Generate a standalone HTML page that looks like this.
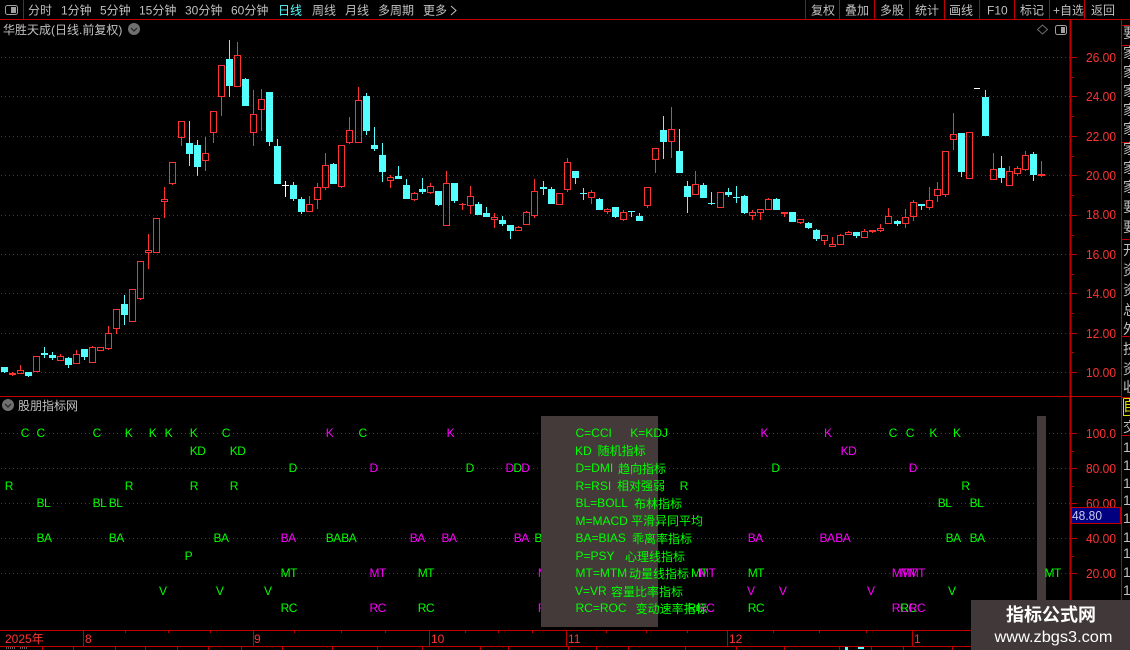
<!DOCTYPE html>
<html><head><meta charset="utf-8"><style>
html,body{margin:0;padding:0;background:#000;width:1130px;height:650px;overflow:hidden}
svg{display:block;position:absolute;left:0;top:0}
text{font-family:"Liberation Sans","WenQuanYi Zen Hei","Noto Sans CJK SC",sans-serif;font-size:12px}
.t{fill:#c0c0c0}
.a{fill:#ff3232;font-size:13px}
.g{fill:#00ff00;letter-spacing:-.5px}
.m{fill:#ff00ff;letter-spacing:-.5px}
.o{fill:#00ff00;font-size:12px}
</style></head><body>
<svg width="1130" height="650" viewBox="0 0 1130 650">
<!-- grid -->
<g stroke="#d00000" stroke-width="1" stroke-dasharray="1 3" fill="none" shape-rendering="crispEdges">
<path d="M1 57.5H1070M1 96.5H1070M1 136.5H1070M1 175.5H1070M1 215.5H1070M1 254.5H1070M1 293.5H1070M1 333.5H1070M1 372.5H1070"/>
<path d="M1 433.5H1070M1 468.5H1070M1 503.5H1070M1 538.5H1070M1 573.5H1070"/>
</g>
<!-- frame lines -->
<g stroke="#c00000" fill="none" shape-rendering="crispEdges">
<path d="M0 19.5H1130M0 396.5H1122M0 630.5H971M0 646.5H971"/>
<path d="M23.5 0V19M805.5 0V19M839.5 0V19M874.5 0V19M909.5 0V19M944.5 0V19M979.5 0V19M1014.5 0V19M1049.5 0V19M1084.5 0V19"/>
<path d="M1070.5 20V630" stroke-width="2"/>
<path d="M1121.5 20V600" stroke-width="1.4"/>
<path d="M1122 25.5H1130M1122 45.5H1130M1122 142.5H1130M1122 239.5H1130M1122 336.5H1130M1122 397.5H1130M1122 435.5H1130"/>
<path d="M1072 57.5H1077M1072 96.5H1077M1072 136.5H1077M1072 175.5H1077M1072 215.5H1077M1072 254.5H1077M1072 293.5H1077M1072 333.5H1077M1072 372.5H1077"/>
<path d="M1072 77.5H1074M1072 116.5H1074M1072 156.5H1074M1072 195.5H1074M1072 235.5H1074M1072 274.5H1074M1072 313.5H1074M1072 352.5H1074"/>
<path d="M1072 433.5H1077M1072 468.5H1077M1072 503.5H1077M1072 538.5H1077M1072 573.5H1077M1072 451.5H1074M1072 486.5H1074M1072 556.5H1074"/>
<path d="M83.5 631V646M253.5 631V646M429.5 631V646M566.5 631V646M727.5 631V646M912.5 631V646"/>
<path d="M125.5 631V633M168.5 631V633M210.5 631V633M294.5 631V633M341.5 631V633M385.5 631V633M465.5 631V633M498.5 631V633M532.5 631V633M606.5 631V633M646.5 631V633M687.5 631V633M773.5 631V633M819.5 631V633M866.5 631V633"/>
<path d="M42.5 647V650M73.5 647V650M115.5 647V650M145.5 647V650M177.5 647V650M208.5 647V650M241.5 647V650M282.5 647V650M332.5 647V650M377.5 647V650M422.5 647V650M480.5 647V650M508.5 647V650M568.5 647V650M596.5 647V650M628.5 647V650M685.5 647V650M736.5 647V650M784.5 647V650M839.5 647V650M871.5 647V650M903.5 647V650M952.5 647V650"/>
</g>
<!-- candles -->
<g fill="none" stroke="#ff3232" stroke-width="1" shape-rendering="crispEdges">
<path d="M12.5 372V373M12.5 375V376M20.5 365V370M60.5 354V356M76.5 350V354M92.5 346V347M108.5 326V333M108.5 349V350M116.5 329V334M140.5 299V300M148.5 234V250M148.5 253V269M164.5 187V199M164.5 202V218M172.5 184V185M181.5 138V146M205.5 137V153M205.5 161V171M213.5 133V143M221.5 97V116M237.5 42V55M253.5 90V114M253.5 133V146M261.5 89V99M261.5 110V131M309.5 196V204M317.5 183V187M317.5 200V209M325.5 153V165M325.5 188V190M341.5 187V188M349.5 117V130M349.5 143V144M358.5 87V100M390.5 175V177M390.5 181V188M414.5 192V193M414.5 200V201M430.5 183V186M430.5 193V194M446.5 171V183M462.5 203V210M470.5 186V196M470.5 206V214M494.5 213V217M494.5 220V228M518.5 226V227M526.5 211V212M534.5 179V191M534.5 216V218M567.5 158V162M567.5 190V192M591.5 190V192M591.5 198V204M607.5 208V209M607.5 212V214M623.5 210V212M623.5 220V221M647.5 206V208M655.5 160V173M671.5 107V129M671.5 142V158M695.5 171V184M752.5 210V212M752.5 216V220M760.5 213V220M768.5 198V199M784.5 214V217M800.5 223V224M824.5 241V245M832.5 237V244M840.5 234V235M848.5 231V232M864.5 229V231M872.5 232V233M880.5 224V228M880.5 231V232M888.5 208V216M905.5 209V217M905.5 224V228M913.5 200V202M913.5 217V221M929.5 187V200M929.5 208V210M937.5 182V189M937.5 196V202M945.5 195V197M953.5 113V134M953.5 140V150M993.5 153V169M1009.5 166V171M1017.5 166V168M1017.5 174V176M1025.5 151V155M1025.5 170V171M1041.5 161V174M1041.5 176V177"/>
<path d="M9.5 373.5h6v1h-6zM17.5 370.5h6v3h-6zM33.5 356.5h6v15h-6zM57.5 356.5h6v4h-6zM73.5 354.5h6v9h-6zM89.5 347.5h6v15h-6zM97.5 347.5h6v3h-6zM105.5 333.5h6v15h-6zM113.5 309.5h6v19h-6zM129.5 289.5h6v32h-6zM137.5 261.5h6v37h-6zM145.5 250.5h6v2h-6zM153.5 218.5h6v34h-6zM161.5 199.5h6v2h-6zM169.5 162.5h6v21h-6zM178.5 121.5h6v16h-6zM202.5 153.5h6v7h-6zM210.5 111.5h6v21h-6zM218.5 65.5h6v31h-6zM234.5 55.5h6v31h-6zM250.5 114.5h6v18h-6zM258.5 99.5h6v10h-6zM306.5 204.5h6v7h-6zM314.5 187.5h6v12h-6zM322.5 165.5h6v22h-6zM338.5 145.5h6v41h-6zM346.5 130.5h6v12h-6zM355.5 100.5h6v42h-6zM387.5 177.5h6v3h-6zM411.5 193.5h6v6h-6zM427.5 186.5h6v6h-6zM443.5 183.5h6v42h-6zM459 204.5h7M467.5 196.5h6v9h-6zM491.5 217.5h6v2h-6zM515.5 227.5h6v3h-6zM523.5 212.5h6v12h-6zM531.5 191.5h6v24h-6zM556.5 193.5h6v11h-6zM564.5 162.5h6v27h-6zM588.5 192.5h6v5h-6zM604.5 209.5h6v2h-6zM620.5 212.5h6v7h-6zM644.5 187.5h6v18h-6zM652.5 148.5h6v11h-6zM668.5 129.5h6v12h-6zM692.5 184.5h6v10h-6zM717.5 192.5h6v15h-6zM749.5 212.5h6v3h-6zM757.5 209.5h6v3h-6zM765.5 199.5h6v10h-6zM781.5 212.5h6v1h-6zM797.5 219.5h6v3h-6zM821.5 235.5h6v5h-6zM829.5 244.5h6v2h-6zM837.5 235.5h6v9h-6zM845.5 232.5h6v2h-6zM861.5 231.5h6v6h-6zM869.5 230.5h6v1h-6zM877.5 228.5h6v2h-6zM885.5 216.5h6v7h-6zM902.5 217.5h6v6h-6zM910.5 202.5h6v14h-6zM926.5 200.5h6v7h-6zM934.5 189.5h6v6h-6zM942.5 151.5h6v43h-6zM950.5 134.5h6v5h-6zM966.5 132.5h6v46h-6zM990.5 169.5h6v10h-6zM1006.5 171.5h6v14h-6zM1014.5 168.5h6v5h-6zM1022.5 155.5h6v14h-6zM1038.5 174.5h6v1h-6z"/>
</g>
<g shape-rendering="crispEdges">
<path fill="none" stroke="#54ffff" d="M4.5 367V373M28.5 372V377M44.5 347V358M52.5 352V360M68.5 357V368M84.5 349V360M124.5 295V325M189.5 121V166M197.5 140V176M229.5 40V97M245.5 78V106M269.5 92V146M277.5 139V184M293.5 182V201M301.5 197V214M333.5 163V184M366.5 93V135M374.5 127V151M382.5 143V182M398.5 166V179M406.5 179V199M422.5 178V194M438.5 191V206M454.5 183V203M478.5 202V215M486.5 207V217M502.5 216V226M510.5 225V239M543.5 181V195M551.5 187V204M575.5 171V184M583.5 188V200M599.5 198V210M615.5 207V218M631.5 211V217M639.5 213V221M663.5 116V159M679.5 129V173M687.5 181V213M703.5 183V198M711.5 192V205M728.5 188V197M736.5 186V203M744.5 195V214M776.5 198V210M808.5 222V229M816.5 229V241M856.5 232V238M897.5 220V226M921.5 204V210M961.5 133V177M985.5 90V136M1001.5 156V183M1033.5 152V181"/>
<path fill="#54ffff" d="M1 367h7v5h-7zM25 372h7v4h-7zM41 353h7v2h-7zM49 355h7v3h-7zM65 358h7v7h-7zM81 349h7v8h-7zM121 304h7v11h-7zM186 143h7v11h-7zM194 145h7v22h-7zM226 59h7v27h-7zM242 79h7v27h-7zM266 92h7v50h-7zM274 146h7v38h-7zM290 185h7v14h-7zM298 199h7v13h-7zM330 164h7v20h-7zM363 96h7v35h-7zM371 145h7v4h-7zM379 155h7v17h-7zM395 176h7v3h-7zM403 185h7v14h-7zM419 189h7v3h-7zM435 191h7v14h-7zM451 183h7v18h-7zM475 204h7v11h-7zM483 213h7v4h-7zM499 220h7v4h-7zM507 225h7v6h-7zM540 187h7v2h-7zM548 189h7v15h-7zM572 171h7v7h-7zM580 193h7v1h-7zM596 199h7v11h-7zM612 207h7v10h-7zM628 211h7v1h-7zM636 216h7v5h-7zM660 130h7v12h-7zM676 151h7v22h-7zM684 186h7v11h-7zM700 185h7v13h-7zM708 203h7v1h-7zM725 192h7v3h-7zM733 197h7v1h-7zM741 196h7v17h-7zM773 199h7v11h-7zM789 212h7v10h-7zM805 223h7v5h-7zM813 230h7v9h-7zM853 232h7v4h-7zM894 221h7v3h-7zM918 204h7v2h-7zM958 133h7v39h-7zM982 97h7v39h-7zM998 168h7v10h-7zM1030 154h7v21h-7z"/>
<path fill="#fff" d="M282 185h7v1h-7zM285 181h1v16h-1zM974 88h6v1h-6z"/>
</g>
<!-- toolbar -->
<rect x="5.5" y="5.5" width="12" height="9" rx="2" fill="none" stroke="#a0a0a0"/><rect x="11" y="7" width="5" height="6" fill="#a0a0a0"/>
<text class="t" x="28" y="14.5">分时</text>
<text class="t" x="61" y="14.5">1分钟</text>
<text class="t" x="100" y="14.5">5分钟</text>
<text class="t" x="139" y="14.5">15分钟</text>
<text class="t" x="185" y="14.5">30分钟</text>
<text class="t" x="231" y="14.5">60分钟</text>
<text x="278" y="14.5" style="fill:#54ffff">日线</text>
<text class="t" x="312" y="14.5">周线</text>
<text class="t" x="345" y="14.5">月线</text>
<text class="t" x="378" y="14.5">多周期</text>
<text class="t" x="423" y="14.5">更多</text>
<path d="M451 6l5 4.500l-5 4.500" fill="none" stroke="#c0c0c0"/>
<text class="t" x="811" y="14.500">复权</text>
<text class="t" x="845" y="14.500">叠加</text>
<text class="t" x="880" y="14.500">多股</text>
<text class="t" x="915" y="14.500">统计</text>
<text class="t" x="949" y="14.500">画线</text>
<text class="t" x="987" y="14.500">F10</text>
<text class="t" x="1020" y="14.500">标记</text>
<text class="t" x="1053" y="14.500">+自选</text>
<text class="t" x="1091" y="14.500">返回</text>
<text class="t" x="3" y="34">华胜天成(日线.前复权)</text>
<text class="t" x="18" y="410">股朋指标网</text>
<circle cx="134" cy="29" r="6" fill="#707070"/><path d="M131 28l3 3 3-3" fill="none" stroke="#222" stroke-width="1.200"/>
<circle cx="8" cy="405" r="6" fill="#707070"/><path d="M5 404l3 3 3-3" fill="none" stroke="#222" stroke-width="1.200"/>
<path d="M1042.500 25l5 4.500-5 4.500-5-4.500z" fill="none" stroke="#707070"/>
<rect x="1055.500" y="25.500" width="11" height="9" rx="2" fill="none" stroke="#a0a0a0"/><rect x="1061" y="27" width="4" height="6" fill="#a0a0a0"/>
<!-- axis labels -->
<text class="a" x="1086" y="62" textLength="30" lengthAdjust="spacingAndGlyphs">26.00</text>
<text class="a" x="1086" y="101" textLength="30" lengthAdjust="spacingAndGlyphs">24.00</text>
<text class="a" x="1086" y="141" textLength="30" lengthAdjust="spacingAndGlyphs">22.00</text>
<text class="a" x="1086" y="180" textLength="30" lengthAdjust="spacingAndGlyphs">20.00</text>
<text class="a" x="1086" y="219" textLength="30" lengthAdjust="spacingAndGlyphs">18.00</text>
<text class="a" x="1086" y="259" textLength="30" lengthAdjust="spacingAndGlyphs">16.00</text>
<text class="a" x="1086" y="298" textLength="30" lengthAdjust="spacingAndGlyphs">14.00</text>
<text class="a" x="1086" y="338" textLength="30" lengthAdjust="spacingAndGlyphs">12.00</text>
<text class="a" x="1086" y="377" textLength="30" lengthAdjust="spacingAndGlyphs">10.00</text>
<text class="a" x="1086" y="438" textLength="30" lengthAdjust="spacingAndGlyphs">100.0</text>
<text class="a" x="1086" y="473" textLength="30" lengthAdjust="spacingAndGlyphs">80.00</text>
<text class="a" x="1086" y="508" textLength="30" lengthAdjust="spacingAndGlyphs">60.00</text>
<text class="a" x="1086" y="543" textLength="30" lengthAdjust="spacingAndGlyphs">40.00</text>
<text class="a" x="1086" y="578" textLength="30" lengthAdjust="spacingAndGlyphs">20.00</text>
<rect x="1071.500" y="507.500" width="49" height="16" fill="#000080" stroke="#c00000"/>
<text x="1072" y="520" style="font-size:13px;fill:#c8c8e8" textLength="30" lengthAdjust="spacingAndGlyphs">48.80</text>
<!-- markers -->
<text class="g" x="20.700" y="437">C</text><text class="g" x="36.500" y="437">C</text><text class="g" x="92.600" y="437">C</text><text class="g" x="124.700" y="437">K</text><text class="g" x="148.800" y="437">K</text><text class="g" x="164.600" y="437">K</text><text class="g" x="189.700" y="437">K</text><text class="g" x="221.800" y="437">C</text><text class="m" x="325.800" y="437">K</text><text class="g" x="358.500" y="437">C</text><text class="m" x="446.600" y="437">K</text><text class="m" x="760.500" y="437">K</text><text class="m" x="824" y="437">K</text><text class="g" x="888.800" y="437">C</text><text class="g" x="905.700" y="437">C</text><text class="g" x="929.400" y="437">K</text><text class="g" x="953" y="437">K</text>
<text class="g" x="189.700" y="455">KD</text><text class="g" x="229.700" y="455">KD</text><text class="m" x="840.600" y="455">KD</text>
<text class="g" x="288.600" y="472">D</text><text class="m" x="369.500" y="472">D</text><text class="g" x="465.600" y="472">D</text><text class="m" x="505.500" y="472">D</text><text class="g" x="513.400" y="472">D</text><text class="m" x="521.300" y="472">D</text><text class="g" x="771.400" y="472">D</text><text class="m" x="908.700" y="472">D</text>
<text class="g" x="4.800" y="490">R</text><text class="g" x="124.700" y="490">R</text><text class="g" x="189.700" y="490">R</text><text class="g" x="229.700" y="490">R</text><text class="g" x="679.600" y="490">R</text><text class="g" x="961.400" y="490">R</text>
<text class="g" x="36.500" y="507">BL</text><text class="g" x="92.600" y="507">BL</text><text class="g" x="108.800" y="507">BL</text><text class="g" x="937.700" y="507">BL</text><text class="g" x="969.600" y="507">BL</text>
<text class="g" x="36.500" y="542">BA</text><text class="g" x="108.800" y="542">BA</text><text class="g" x="213.500" y="542">BA</text><text class="m" x="280.600" y="542">BA</text><text class="g" x="325.800" y="542">BA</text><text class="g" x="341.300" y="542">BA</text><text class="m" x="409.800" y="542">BA</text><text class="m" x="441.500" y="542">BA</text><text class="m" x="513.800" y="542">BA</text><text class="g" x="534.400" y="542">BA</text><text class="m" x="747.700" y="542">BA</text><text class="m" x="819.500" y="542">BA</text><text class="m" x="835.300" y="542">BA</text><text class="g" x="945.600" y="542">BA</text><text class="g" x="969.600" y="542">BA</text>
<text class="g" x="184.600" y="560">P</text>
<text class="g" x="280.600" y="577">MT</text><text class="m" x="369.500" y="577">MT</text><text class="g" x="417.700" y="577">MT</text><text class="m" x="537.900" y="577">MT</text><text class="g" x="691" y="577">MT</text><text class="m" x="699" y="577">MT</text><text class="g" x="747.700" y="577">MT</text><text class="m" x="891.800" y="577">MT</text><text class="m" x="900.400" y="577">MT</text><text class="m" x="908.700" y="577">MT</text>
<text class="g" x="159" y="595">V</text><text class="g" x="215.900" y="595">V</text><text class="g" x="264" y="595">V</text><text class="m" x="747" y="595">V</text><text class="m" x="778.900" y="595">V</text><text class="m" x="867" y="595">V</text><text class="g" x="948" y="595">V</text>
<text class="g" x="280.600" y="612">RC</text><text class="m" x="369.500" y="612">RC</text><text class="g" x="417.700" y="612">RC</text><text class="m" x="537.900" y="612">RC</text><text class="g" x="687.500" y="612">RC</text><text class="m" x="698" y="612">RC</text><text class="g" x="747.700" y="612">RC</text><text class="m" x="891.800" y="612">RC</text><text class="g" x="900.400" y="612">RC</text><text class="m" x="908.700" y="612">RC</text>
<!-- overlay rects -->
<rect x="541" y="416" width="117" height="211" fill="#453a3a"/>
<rect x="1037" y="416" width="9" height="211" fill="#453a3a"/>
<text class="g" x="1044.500" y="577">MT</text>
<text class="o" x="575.500" y="437">C=CCI</text><text class="o" x="630.300" y="437">K=KDJ</text>
<text class="o" x="575" y="455">KD</text><text class="o" x="597.600" y="455">随机指标</text>
<text class="o" x="575.500" y="472">D=DMI</text><text class="o" x="618" y="473">趋向指标</text>
<text class="o" x="575.500" y="490">R=RSI</text><text class="o" x="617" y="490">相对强弱</text>
<text class="o" x="575.500" y="507">BL=BOLL</text><text class="o" x="634" y="508">布林指标</text>
<text class="o" x="575.500" y="525">M=MACD</text><text class="o" x="631" y="525">平滑异同平均</text>
<text class="o" x="575.500" y="542">BA=BIAS</text><text class="o" x="632" y="543">乖离率指标</text>
<text class="o" x="575.500" y="560">P=PSY</text><text class="o" x="625" y="561">心理线指标</text>
<text class="o" x="575.500" y="577">MT=MTM</text><text class="o" x="629" y="578">动量线指标</text>
<text class="o" x="575" y="595">V=VR</text><text class="o" x="611" y="596">容量比率指标</text>
<text class="o" x="575.500" y="612">RC=ROC</text><text class="o" x="635.600" y="613">变动速率指标</text>
<!-- date axis -->
<text x="5" y="643" style="fill:#ff3232">2025年</text>
<text x="85" y="643" style="fill:#ff3232">8</text>
<text x="254" y="643" style="fill:#ff3232">9</text>
<text x="431" y="643" style="fill:#ff3232">10</text>
<text x="568" y="643" style="fill:#ff3232">11</text>
<text x="729" y="643" style="fill:#ff3232">12</text>
<text x="914" y="643" style="fill:#ff3232">1</text>
<path d="M6 648h10M20 648h8" stroke="#c0c0c0" stroke-dasharray="1 1" fill="none"/>
<rect x="845" y="647" width="3" height="3" fill="#54ffff"/><rect x="858" y="647" width="6" height="2" fill="#54ffff"/>
<!-- right strip -->
<svg x="1122" y="20" width="8" height="580" viewBox="0 0 8 580">
<text class="t" x="1" y="18" style="font-size:14px">要</text><text class="t" x="1" y="38" style="font-size:14px">家</text><text class="t" x="1" y="57" style="font-size:14px">家</text><text class="t" x="1" y="76" style="font-size:14px">家</text><text class="t" x="1" y="95" style="font-size:14px">家</text><text class="t" x="1" y="114" style="font-size:14px">家</text><text class="t" x="1" y="134" style="font-size:14px">家</text><text class="t" x="1" y="153" style="font-size:14px">家</text><text class="t" x="1" y="172" style="font-size:14px">家</text><text class="t" x="1" y="192" style="font-size:14px">要</text><text class="t" x="1" y="212" style="font-size:14px">要</text>
<text class="t" x="1" y="235" style="font-size:14px">开</text><text class="t" x="1" y="255" style="font-size:14px">资</text><text class="t" x="1" y="275" style="font-size:14px">资</text><text class="t" x="1" y="295" style="font-size:14px">总</text><text class="t" x="1" y="314" style="font-size:14px">外</text>
<text class="t" x="1" y="334" style="font-size:14px">技</text><text class="t" x="1" y="354" style="font-size:14px">资</text><text class="t" x="1" y="372" style="font-size:14px">收</text>
<text x="1" y="391" style="font-size:14px;fill:#e0e000">自</text>
<text class="t" x="1" y="412" style="font-size:14px">交</text>
<text class="t" x="1" y="432" style="font-size:14px">1</text><text class="t" x="1" y="450" style="font-size:14px">1</text><text class="t" x="1" y="468" style="font-size:14px">1</text><text class="t" x="1" y="485" style="font-size:14px">1</text><text class="t" x="1" y="503" style="font-size:14px">1</text><text class="t" x="1" y="522" style="font-size:14px">1</text><text class="t" x="1" y="538" style="font-size:14px">1</text><text class="t" x="1" y="557" style="font-size:14px">1</text><text class="t" x="1" y="575" style="font-size:14px">1</text>
</svg>
<path d="M1123.500 398.500H1130M1123.500 398.500V415.500H1130" fill="none" stroke="#e0e000" shape-rendering="crispEdges"/>
<!-- watermark -->
<rect x="971" y="600" width="159" height="50" fill="#413939"/>
<text x="1051" y="621" text-anchor="middle" fill="#fff" style="font-size:18px;font-weight:bold">指标公式网</text>
<text x="1053.500" y="642" text-anchor="middle" fill="#fff" style="font-size:16px" textLength="118" lengthAdjust="spacingAndGlyphs">www.zbgs3.com</text>
</svg>
</body></html>
